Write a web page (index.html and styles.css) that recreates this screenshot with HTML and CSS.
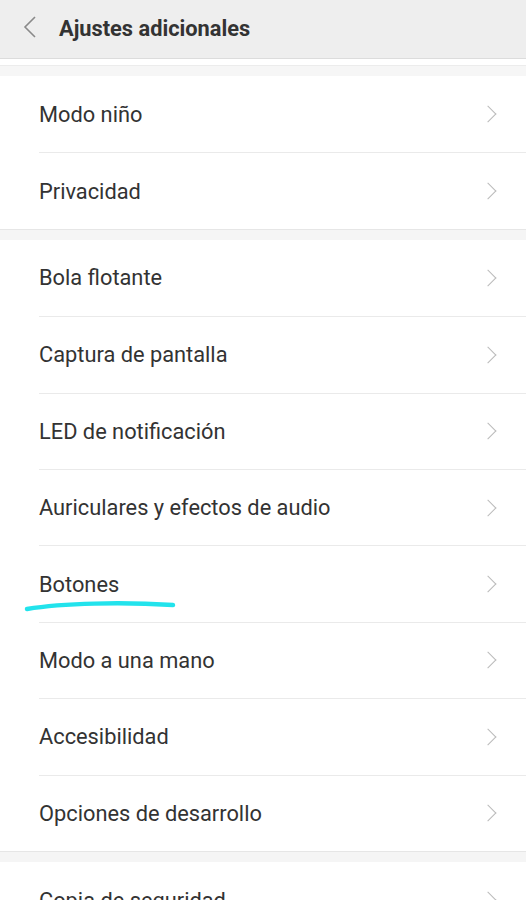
FILE: index.html
```html
<!DOCTYPE html>
<html lang="es">
<head>
  <meta charset="UTF-8" />
  <title>Ajustes adicionales</title>
  <meta name="viewport" content="width=device-width, initial-scale=1.0" />
  <link rel="stylesheet" href="styles.css">
</head>
<body>
  <div class="header">
    <svg class="back" width="14" height="22" viewBox="0 0 14 22">
      <path d="M12 1 L2 11 L12 21" fill="none" stroke="#8a8a8a" stroke-width="1.6"/>
    </svg>
    <h1>Ajustes adicionales</h1>
  </div>

  <div class="top-gap"></div>

  <div class="group">
    <div class="item"><span>Modo niño</span><i class="chev"></i></div>
    <div class="item"><span>Privacidad</span><i class="chev"></i></div>
  </div>

  <div class="band"></div>

  <div class="group">
    <div class="item"><span>Bola flotante</span><i class="chev"></i></div>
    <div class="item"><span>Captura de pantalla</span><i class="chev"></i></div>
    <div class="item"><span>LED de notificación</span><i class="chev"></i></div>
    <div class="item"><span>Auriculares y efectos de audio</span><i class="chev"></i></div>
    <div class="item marked">
      <span>Botones</span><i class="chev"></i>
      <svg class="mark" width="160" height="16" viewBox="0 0 160 16">
        <path d="M4 11 C 40 5, 100 4, 150 7" fill="none" stroke="#22e3ec" stroke-width="4.5" stroke-linecap="round"/>
      </svg>
    </div>
    <div class="item"><span>Modo a una mano</span><i class="chev"></i></div>
    <div class="item"><span>Accesibilidad</span><i class="chev"></i></div>
    <div class="item"><span>Opciones de desarrollo</span><i class="chev"></i></div>
  </div>

  <div class="band"></div>

  <div class="group">
    <div class="item"><span>Copia de seguridad</span><i class="chev"></i></div>
  </div>
</body>
</html>
```

FILE: styles.css
```css
body {
  margin: 0;
  background: #fff;
  font-family: Roboto, "Noto Sans", sans-serif;
  color: #333;
  overflow: hidden;
}

.header {
  height: 58px;
  background: #eeeeee;
  border-bottom: 1px solid #dcdcdc;
  display: flex;
  align-items: center;
  padding-left: 23px;
}

.header .back {
  margin-right: 22px;
  margin-top: -4px;
}

.header h1 {
  margin: 0 0 2px 0;
  font-size: 21.8px;
  font-weight: bold;
  color: #333;
}

.top-gap {
  height: 7px;
  border-bottom: 1px solid #ececec;
  box-sizing: border-box;
  background: #fff;
}

.top-gap + .group {
  border-top: 10px solid #f6f6f6;
}

.band {
  height: 11px;
  background: #f5f5f5;
  border-top: 1px solid #e6e6e6;
  box-sizing: border-box;
}

.group {
  background: #fff;
}

.item {
  height: 76.4px;
  margin-left: 39px;
  padding-right: 30px;
  display: flex;
  align-items: center;
  justify-content: space-between;
  font-size: 21.8px;
  color: #333;
  box-sizing: border-box;
  position: relative;
}

.item + .item {
  border-top: 1px solid #eaeaea;
}

.chev {
  width: 11px;
  height: 11px;
  border-top: 1.3px solid #bbbbbb;
  border-right: 1.3px solid #bbbbbb;
  transform: rotate(45deg);
  margin-right: 2px;
}

.mark {
  position: absolute;
  left: -16px;
  top: 52px;
}
```
